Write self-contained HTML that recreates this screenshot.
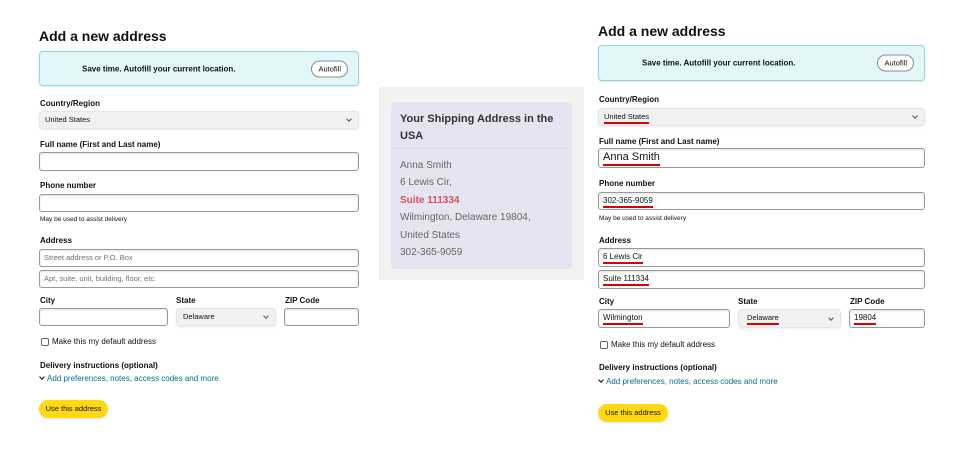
<!DOCTYPE html>
<html><head><meta charset="utf-8"><style>
*{margin:0;padding:0;box-sizing:border-box}
body{width:970px;height:450px;background:#fff;position:relative;overflow:hidden;font-family:"Liberation Sans",sans-serif;color:#0f1111}
.a{position:absolute}
.t{font-size:14px;font-weight:bold;white-space:nowrap}
.box{background:#e3f7fb;border:1px solid #8fd7e3;border-radius:4px;box-shadow:0 1px 2px rgba(0,0,0,.1)}
.box span{position:absolute;font-size:8px;font-weight:bold;top:50%;transform:translateY(-50%)}
.af{position:absolute;background:#fff;border:1px solid #888c8c;border-radius:9px;font-size:7.5px;height:17px;line-height:15px;padding:0 6px;top:50%;transform:translateY(-50%)}
.l{font-size:8px;font-weight:bold;white-space:nowrap;line-height:10px}
.in{border:1px solid #999;border-radius:3px;background:#fff;font-size:7.5px;padding-left:4px;white-space:nowrap;box-shadow:inset 0 1px 2px rgba(15,17,17,.12)}
.ph{color:#6f7373}
.sel{background:#f0f2f2;border-radius:4px;border:1px solid #e3e6e6;font-size:7.5px;padding-left:5px;white-space:nowrap;box-shadow:0 1px 2px rgba(0,0,0,.08)}
.chev{position:absolute;right:7px;top:50%;width:4px;height:4px;border-right:1px solid #555;border-bottom:1px solid #555;transform:translateY(-75%) rotate(45deg)}
.s{font-size:6.5px;white-space:nowrap}
.cb{width:8px;height:8px;border:1px solid #666;border-radius:2px;background:#fff}
.lk{font-size:8px;color:#007185;white-space:nowrap}
.lk i{display:inline-block;width:4px;height:4px;border-right:1px solid #0f1111;border-bottom:1px solid #0f1111;transform:translateY(-2px) rotate(45deg);margin:0 3px 0 2px}
.btn{background:#ffd814;border-radius:10px;font-size:7.5px;text-align:center;white-space:nowrap;box-shadow:0 1px 2px rgba(0,0,0,.1)}
u{text-decoration:none;border-bottom:2px solid #d00;padding-bottom:1px}
</style></head><body>

<!-- LEFT -->
<div class="a t" style="left:39px;top:28px">Add a new address</div>
<div class="a box" style="left:39px;top:51px;width:320px;height:35px"><span style="left:42px">Save time. Autofill your current location.</span><div class="af" style="right:10px">Autofill</div></div>
<div class="a l" style="left:40px;top:99px">Country/Region</div>
<div class="a sel" style="left:39px;top:111px;width:320px;height:18px;line-height:16px">United States<i class="chev"></i></div>
<div class="a l" style="left:40px;top:140px">Full name (First and Last name)</div>
<div class="a in" style="left:39px;top:152px;width:320px;height:19px"></div>
<div class="a l" style="left:40px;top:181px">Phone number</div>
<div class="a in" style="left:39px;top:194px;width:320px;height:18px"></div>
<div class="a s" style="left:40px;top:216px">May be used to assist delivery</div>
<div class="a l" style="left:40px;top:236px">Address</div>
<div class="a in ph" style="left:39px;top:249px;width:320px;height:18px;line-height:16px">Street address or P.O. Box</div>
<div class="a in ph" style="left:39px;top:270px;width:320px;height:18px;line-height:16px">Apt, suite, unit, building, floor, etc.</div>
<div class="a l" style="left:40px;top:296px">City</div>
<div class="a l" style="left:176px;top:296px">State</div>
<div class="a l" style="left:285px;top:296px">ZIP Code</div>
<div class="a in" style="left:39px;top:308px;width:129px;height:18px"></div>
<div class="a sel" style="left:176px;top:308px;width:100px;height:18px;line-height:16px;padding-left:6px">Delaware<i class="chev"></i></div>
<div class="a in" style="left:284px;top:308px;width:75px;height:18px"></div>
<div class="a cb" style="left:41px;top:338px"></div>
<div class="a" style="left:52px;top:337px;font-size:8px">Make this my default address</div>
<div class="a l" style="left:40px;top:361px">Delivery instructions (optional)</div>
<div class="a lk" style="left:38px;top:374px"><i></i>Add preferences, notes, access codes and more</div>
<div class="a btn" style="left:39px;top:400px;width:69px;height:18px;line-height:18px">Use this address</div>

<!-- MIDDLE -->
<div class="a" style="left:379px;top:87px;width:205px;height:193px;background:#f2f2f2"></div>
<div class="a" style="left:391px;top:102px;width:181px;height:167px;background:#e5e5f1;border-radius:4px"></div>
<div class="a" style="left:391px;top:148px;width:181px;height:1px;background:#dcdce8"></div>
<div class="a" style="left:400px;top:111px;font-size:11px;font-weight:bold;line-height:17px;color:#333;width:165px">Your Shipping Address in the USA</div>
<div class="a" style="left:400px;top:157px;font-size:10px;line-height:17.4px;color:#666;white-space:nowrap">Anna Smith<br>6 Lewis Cir,<br><b style="color:#e0505a">Suite 111334</b><br>Wilmington, Delaware 19804,<br>United States<br>302-365-9059</div>

<!-- RIGHT -->
<div class="a t" style="left:598px;top:23px">Add a new address</div>
<div class="a box" style="left:598px;top:45px;width:327px;height:36px"><span style="left:43px">Save time. Autofill your current location.</span><div class="af" style="right:10px">Autofill</div></div>
<div class="a l" style="left:599px;top:95px">Country/Region</div>
<div class="a sel" style="left:598px;top:108px;width:327px;height:18px;line-height:16px"><u>United States</u><i class="chev"></i></div>
<div class="a l" style="left:599px;top:137px">Full name (First and Last name)</div>
<div class="a in" style="left:598px;top:148px;width:327px;height:20px;line-height:16px;font-size:11px"><u>Anna Smith</u></div>
<div class="a l" style="left:599px;top:179px">Phone number</div>
<div class="a in" style="left:598px;top:192px;width:327px;height:18px;line-height:15px;font-size:8px"><u>302-365-9059</u></div>
<div class="a s" style="left:599px;top:215px">May be used to assist delivery</div>
<div class="a l" style="left:599px;top:236px">Address</div>
<div class="a in" style="left:598px;top:248px;width:327px;height:19px;line-height:16px;font-size:8px"><u>6 Lewis Cir</u></div>
<div class="a in" style="left:598px;top:270px;width:327px;height:19px;line-height:16px;font-size:8px"><u>Suite 111334</u></div>
<div class="a l" style="left:599px;top:297px">City</div>
<div class="a l" style="left:738px;top:297px">State</div>
<div class="a l" style="left:850px;top:297px">ZIP Code</div>
<div class="a in" style="left:598px;top:309px;width:132px;height:19px;line-height:16px;font-size:8px"><u>Wilmington</u></div>
<div class="a sel" style="left:738px;top:309px;width:103px;height:19px;line-height:16px;padding-left:8px"><u>Delaware</u><i class="chev"></i></div>
<div class="a in" style="left:849px;top:309px;width:76px;height:19px;line-height:16px;font-size:8px"><u>19804</u></div>
<div class="a cb" style="left:600px;top:341px"></div>
<div class="a" style="left:611px;top:340px;font-size:8px">Make this my default address</div>
<div class="a l" style="left:599px;top:363px">Delivery instructions (optional)</div>
<div class="a lk" style="left:597px;top:377px"><i></i>Add preferences, notes, access codes and more</div>
<div class="a btn" style="left:598px;top:404px;width:70px;height:18px;line-height:18px">Use this address</div>
</body></html>
